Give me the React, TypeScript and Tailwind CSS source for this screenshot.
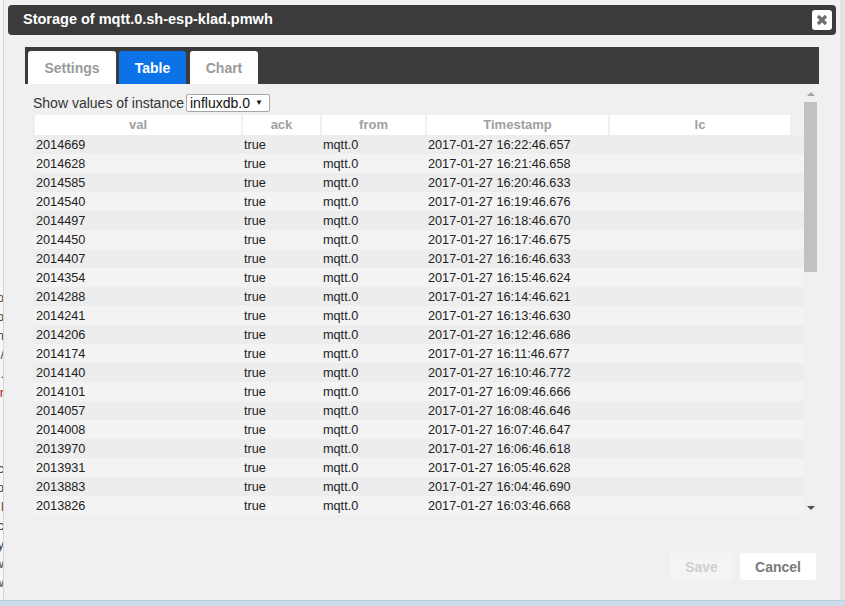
import React from "react";

const rows: [string, string][] = [
  ["2014669", "16:22:46.657"],
  ["2014628", "16:21:46.658"],
  ["2014585", "16:20:46.633"],
  ["2014540", "16:19:46.676"],
  ["2014497", "16:18:46.670"],
  ["2014450", "16:17:46.675"],
  ["2014407", "16:16:46.633"],
  ["2014354", "16:15:46.624"],
  ["2014288", "16:14:46.621"],
  ["2014241", "16:13:46.630"],
  ["2014206", "16:12:46.686"],
  ["2014174", "16:11:46.677"],
  ["2014140", "16:10:46.772"],
  ["2014101", "16:09:46.666"],
  ["2014057", "16:08:46.646"],
  ["2014008", "16:07:46.647"],
  ["2013970", "16:06:46.618"],
  ["2013931", "16:05:46.628"],
  ["2013883", "16:04:46.690"],
  ["2013826", "16:03:46.668"],
];

const sideLetters = ["o", "o", "n", "/", ".", "r", "", "", "", "c", "o", "l", "c", "y", "w", "w"];

export default function App() {
  return (
    <div
      className="w-[845px] h-[606px] overflow-hidden flex flex-col bg-[#e4e4e4]"
      style={{ fontFamily: '"Liberation Sans", Arial, sans-serif' }}
    >
      <div className="flex h-[600px]">
        {/* page behind, left sliver */}
        <div className="w-[3px] h-full overflow-hidden bg-[#f7f7f7]">
          <div className="w-[10px] -ml-[6px] pt-[288px] flex flex-col text-[13px] leading-[19px] text-[#444] text-right">
            {sideLetters.map((l, i) => (
              <span key={i} className={i === 5 ? "text-[#b22222] h-[19px]" : "h-[19px]"}>
                {l}
              </span>
            ))}
          </div>
        </div>
        {/* dialog */}
        <div className="w-[837px] h-full bg-[#f0f0f0] border-l border-[#d6d6d6] flex flex-col">
          {/* title bar */}
          <div className="mt-[5px] ml-[4px] mr-[4px] h-[30px] rounded-[4px] bg-[#3b3b3b] flex items-center justify-between pl-[15px] pr-[4px]">
            <span className="text-white font-bold text-[14.5px]">Storage of mqtt.0.sh-esp-klad.pmwh</span>
            <div className="w-[20px] h-[20px] bg-white rounded-[3px] flex items-center justify-center">
              <svg width="12" height="12" viewBox="0 0 12 12">
                <path d="M2 2 L10 10 M10 2 L2 10" stroke="#6e6e6e" strokeWidth="3.2" />
              </svg>
            </div>
          </div>

          {/* tabs container */}
          <div className="mt-[12px] ml-[21px] w-[794px] flex flex-col">
            <div className="h-[37px] bg-[#3b3b3b] flex items-end pl-[3px] gap-[3px]">
              <div className="w-[88px] h-[33px] pt-[2px] bg-white rounded-t-[3px] flex items-center justify-center text-[14px] font-bold text-[#9a9a9a]">
                Settings
              </div>
              <div className="w-[67px] h-[33px] pt-[2px] bg-[#0b72e7] rounded-t-[3px] flex items-center justify-center text-[14px] font-bold text-white">
                Table
              </div>
              <div className="w-[68px] h-[33px] pt-[2px] bg-white rounded-t-[3px] flex items-center justify-center text-[14px] font-bold text-[#9a9a9a] ml-[1px]">
                Chart
              </div>
            </div>

            {/* content */}
            <div className="h-[432px] flex">
              <div className="flex-1 pt-[10px] pl-[8px]">
                <div className="flex items-center h-[18px] text-[14px] text-[#333]">
                  <span>Show values of instance</span>
                  <div className="ml-[2px] w-[84px] h-[18px] bg-white border border-[#a6a6a6] rounded-[2px] flex items-center pl-[3px] text-[14px] text-[#111]">
                    <span>influxdb.0</span>
                    <span className="ml-[5px] text-[8px]">▼</span>
                  </div>
                </div>
                {/* header */}
                <div className="mt-[3px] pl-[2px] grid grid-cols-[206px_77px_103px_181px_180px] gap-x-[2px] h-[18px]">
                  {["val", "ack", "from", "Timestamp", "lc"].map((h) => (
                    <div key={h} className="bg-white flex items-center justify-center text-[13px] font-bold text-[#a0a0a0]">
                      {h}
                    </div>
                  ))}
                </div>
                {/* rows */}
                <div className="mt-[2px] flex flex-col">
                  {rows.map(([v, t], i) => (
                    <div
                      key={v}
                      className={
                        "h-[19px] pl-[3px] pt-[1px] grid grid-cols-[206px_77px_103px_181px_180px] gap-x-[2px] items-center text-[12.7px] text-[#222] " +
                        (i % 2 === 0 ? "bg-[#ededed]" : "bg-[#f3f3f3]")
                      }
                    >
                      <span>{v}</span>
                      <span>true</span>
                      <span>mqtt.0</span>
                      <span>2017-01-27 {t}</span>
                      <span></span>
                    </div>
                  ))}
                </div>
              </div>
              {/* scrollbar */}
              <div className="w-[13px] mr-[2px] flex flex-col items-center pt-[8px] pb-[6px]">
                <svg width="8" height="4" viewBox="0 0 8 4">
                  <path d="M0 4 L4 0 L8 4 Z" fill="#a3a3a3" />
                </svg>
                <div className="mt-[6px] w-[13px] h-[170px] bg-[#c1c1c1]" />
                <div className="flex-1" />
                <svg width="8" height="4" viewBox="0 0 8 4">
                  <path d="M0 0 L8 0 L4 4 Z" fill="#505050" />
                </svg>
              </div>
            </div>

            {/* buttons */}
            <div className="mt-[37px] flex justify-end gap-[7px] pr-[3px]">
              <div className="w-[63px] h-[27px] pt-[1px] bg-[#f4f4f4] rounded-[3px] flex items-center justify-center text-[14px] font-bold text-[#cfcfcf]">
                Save
              </div>
              <div className="w-[76px] h-[27px] pt-[1px] bg-white rounded-[3px] flex items-center justify-center text-[14px] font-bold text-[#7a7a7a]">
                Cancel
              </div>
            </div>
          </div>
        </div>
        <div className="flex-1 bg-[#e2e2e2]" />
      </div>
      <div className="h-[6px] bg-[#cbdde8] border-t border-[#b9cfdc]" />
    </div>
  );
}
